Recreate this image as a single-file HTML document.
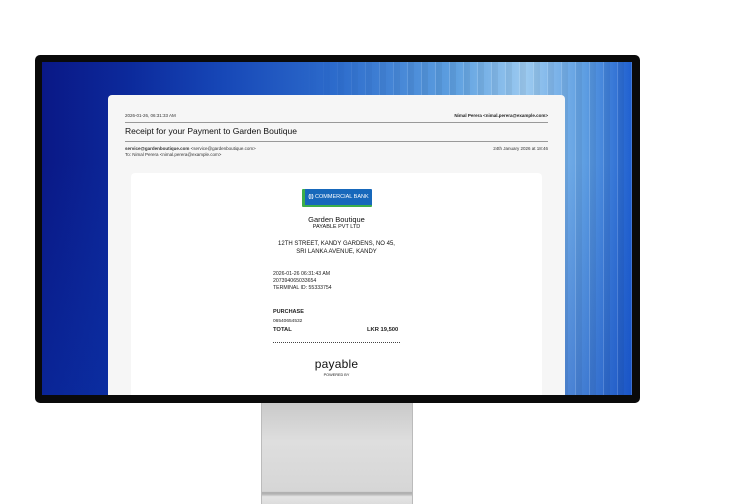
<!DOCTYPE html>
<html><head><meta charset="utf-8"><style>
*{margin:0;padding:0;box-sizing:border-box}
body{width:756px;height:504px;background:#fff;position:relative;overflow:hidden;font-family:"Liberation Sans",sans-serif;color:#111}
.stand{position:absolute;left:261px;top:400px;width:152px;height:104px;background:linear-gradient(#c8c8c8,#dedede 40%,#d6d6d6 88%,#a9a9a9 89%,#bdbdbd 91%,#e4e4e4 93%,#dcdcdc);border-left:1px solid #bbb;border-right:1px solid #bbb}
.frame{position:absolute;left:35px;top:55px;width:605px;height:348px;background:#0a0a0a;border-radius:5px}
.screen{position:absolute;left:42px;top:62px;width:590px;height:333px;overflow:hidden;
background:linear-gradient(180deg,rgba(0,0,0,0) 30%,rgba(10,60,180,.35) 100%),
linear-gradient(90deg,#0a1886 0%,#0c2a9c 15%,#1646b6 30%,#2d6ccc 50%,#5ea0e0 70%,#9ccaf0 82%,#5e9ee2 92%,#2060d0 100%)}
.stripes{position:absolute;left:260px;top:0;right:0;bottom:0;background:repeating-linear-gradient(90deg,rgba(255,255,255,0) 0 7px,rgba(255,255,255,.16) 7px 8px,rgba(0,0,0,.05) 8px 14px);-webkit-mask-image:linear-gradient(90deg,transparent,#000 40%);mask-image:linear-gradient(90deg,transparent,#000 40%)}
.mail{position:absolute;left:66px;top:33px;width:457px;height:310px;background:#f6f6f6;border-radius:4px}
.s{font-size:4.5px;color:#333;position:absolute}
.hr{position:absolute;left:17px;right:17px;height:1px;background:#999}
.card{position:absolute;left:23px;top:78px;width:411px;height:240px;background:#fff;border-radius:4px}
.c{position:absolute;left:0;width:411px;text-align:center}
.logo{position:absolute;left:171px;top:16px;width:70px;height:18px;background:#1768bb;border-left:3px solid #3dae4a;border-bottom:2px solid #3dae4a;color:#fff;font-size:5.5px;line-height:16px;text-align:center;border-radius:1px}
.r{position:absolute;left:142px;font-size:5.2px;color:#222}
</style></head><body>
<div class="stand"></div>
<div class="frame"></div>
<div class="screen">
 <div class="stripes"></div>
 <div class="mail">
  <div class="s" style="left:17px;top:18px">2026-01-26, 06:31:33 AM</div>
  <div class="s" style="right:17px;top:18px;font-weight:bold;color:#222">Nimal Perera &lt;nimal.perera@example.com&gt;</div>
  <div class="hr" style="top:27px"></div>
  <div style="position:absolute;left:17px;top:31px;font-size:8.5px;color:#111">Receipt for your Payment to Garden Boutique</div>
  <div class="hr" style="top:46px"></div>
  <div class="s" style="left:17px;top:51px"><b>service@gardenboutique.com</b> &lt;service@gardenboutique.com&gt;</div>
  <div class="s" style="left:17px;top:57px">To: Nimal Perera &lt;nimal.perera@example.com&gt;</div>
  <div class="s" style="right:17px;top:51px">24th January 2026 at 18:46</div>
  <div class="card">
   <div class="logo"><b>(|)</b> COMMERCIAL BANK</div>
   <div class="c" style="top:42px;font-size:7.5px">Garden Boutique</div>
   <div class="c" style="top:51px;font-size:5.5px">PAYABLE PVT LTD</div>
   <div class="c" style="top:67px;font-size:6px;line-height:8px">12TH STREET, KANDY GARDENS, NO 45,<br>SRI LANKA AVENUE, KANDY</div>
   <div class="r" style="top:98px;line-height:7px">2026-01-26 06:31:43 AM<br>207394065033654<br>TERMINAL ID: 55333754</div>
   <div class="r" style="top:136px;font-weight:bold;font-size:5.5px">PURCHASE</div>
   <div class="r" style="top:146px;font-size:4.8px">06540654532</div>
   <div class="r" style="top:154px;font-weight:bold;font-size:5.8px">TOTAL</div>
   <div class="r" style="top:154px;left:236px;font-weight:bold;font-size:5.8px">LKR 19,500</div>
   <div style="position:absolute;left:142px;top:169px;width:127px;border-top:1px dotted #444"></div>
   <div class="c" style="top:184px;font-size:12px;letter-spacing:.2px">payable</div>
   <div class="c" style="top:200px;font-size:3.8px">POWERED BY</div>
  </div>
 </div>
</div>
</body></html>
